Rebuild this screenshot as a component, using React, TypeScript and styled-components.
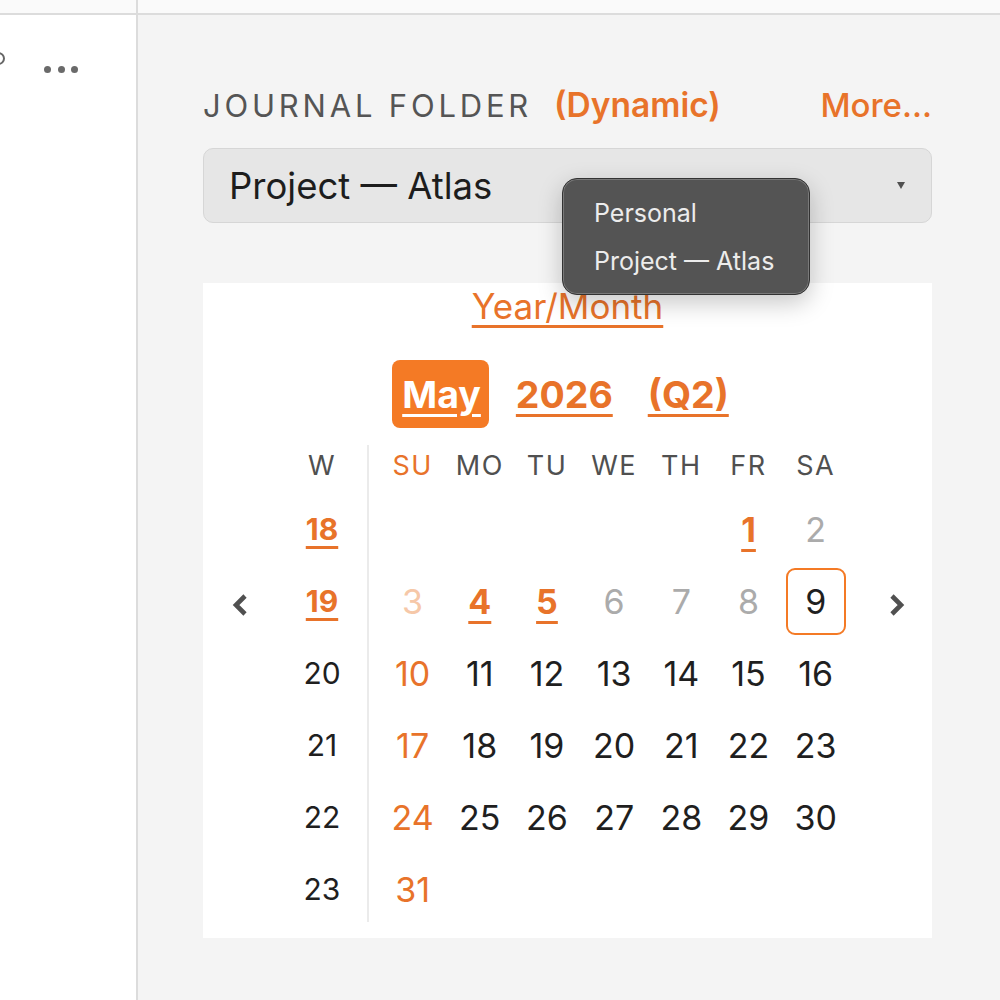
import styled, { createGlobalStyle } from 'styled-components';

const ORANGE = '#e8732a';
const ORANGE_FILL = '#f47a25';

const GlobalStyle = createGlobalStyle`
  html, body {
    margin: 0;
    padding: 0;
  }
  body {
    font-family: Inter, "Noto Sans", sans-serif;
    -webkit-font-smoothing: antialiased;
  }
  #root {
    width: 1000px;
    height: 1000px;
    overflow: hidden;
  }
`;

type DayKind = 'normal' | 'sunday' | 'muted' | 'faintSunday' | 'entry' | 'today';

interface Day {
  date: number;
  kind: DayKind;
}

const WEEKDAYS = ['SU', 'MO', 'TU', 'WE', 'TH', 'FR', 'SA'];
const FIRST_WEEK = 18;
const FIRST_WEEKDAY = 5; // May 1st 2026 is a Friday
const DAYS_IN_MONTH = 31;
const TODAY = 9;
const ENTRIES = [1, 4, 5];

function dayKind(date: number, weekday: number): DayKind {
  if (date === TODAY) return 'today';
  if (ENTRIES.includes(date)) return 'entry';
  if (date < TODAY) return weekday === 0 ? 'faintSunday' : 'muted';
  return weekday === 0 ? 'sunday' : 'normal';
}

function buildWeeks(): Day[][] {
  const weeks: Day[][] = [];
  let week: Day[] = new Array(FIRST_WEEKDAY).fill(null);
  for (let date = 1; date <= DAYS_IN_MONTH; date++) {
    const weekday = (FIRST_WEEKDAY + date - 1) % 7;
    week.push({ date, kind: dayKind(date, weekday) });
    if (weekday === 6) {
      weeks.push(week);
      week = [];
    }
  }
  if (week.length) weeks.push(week);
  return weeks;
}

function Chevron({ dir }: { dir: 'left' | 'right' }) {
  const points = dir === 'left' ? '13,3 4,12 13,21' : '4,3 13,12 4,21';
  return (
    <svg width="17" height="24" viewBox="0 0 17 24">
      <polyline points={points} fill="none" stroke="#505050" strokeWidth="4.6" />
    </svg>
  );
}

export default function App() {
  const weeks = buildWeeks();

  return (
    <>
      <GlobalStyle />
      <Page>
        <Sidebar>
          <TopStrip />
          <SidebarRow>
            <ClippedRing />
            <MoreDots>
              <span />
              <span />
              <span />
            </MoreDots>
          </SidebarRow>
        </Sidebar>

        <Main>
          <TopStrip />
          <Panel>
            <Header>
              <Label>JOURNAL FOLDER</Label>
              <Dynamic>(Dynamic)</Dynamic>
              <MoreLink>More...</MoreLink>
            </Header>

            <Select>
              <span>Project — Atlas</span>
              <Caret />
            </Select>

            <Popup>
              <PopupItem>Personal</PopupItem>
              <PopupItem>Project — Atlas</PopupItem>
            </Popup>

            <Card>
              <YearMonth>Year/Month</YearMonth>
              <MonthRow>
                <MonthButton $active>May</MonthButton>
                <MonthButton>2026</MonthButton>
                <MonthButton>(Q2)</MonthButton>
              </MonthRow>

              <Grid>
                <HeadCell $col={2} $row={1}>W</HeadCell>
                {WEEKDAYS.map((d, i) => (
                  <HeadCell key={d} $col={5 + i} $row={1} $sunday={i === 0}>
                    {d}
                  </HeadCell>
                ))}
                <Divider />
                <ArrowCell $col={1} $row={3}>
                  <Chevron dir="left" />
                </ArrowCell>
                <ArrowCell $col={12} $row={3} $shift={12}>
                  <Chevron dir="right" />
                </ArrowCell>

                {weeks.map((week, r) => {
                  const weekNo = FIRST_WEEK + r;
                  const hasEntry = week.some((d) => d && d.kind === 'entry');
                  return [
                    <WeekCell key={`w${weekNo}`} $row={r + 2} $entry={hasEntry}>
                      <span>{weekNo}</span>
                    </WeekCell>,
                    ...week.map((day, c) =>
                      day ? (
                        <DayCell key={day.date} $col={5 + c} $row={r + 2} $kind={day.kind}>
                          <span>{day.date}</span>
                        </DayCell>
                      ) : null,
                    ),
                  ];
                })}
              </Grid>
            </Card>
          </Panel>
        </Main>
      </Page>
    </>
  );
}

const Page = styled.div`
  display: flex;
  width: 1000px;
  height: 1000px;
`;

const TopStrip = styled.div`
  height: 13px;
  background: #fafafa;
  border-bottom: 2px solid #dcdcdc;
`;

const Sidebar = styled.aside`
  width: 136px;
  flex-shrink: 0;
  background: #ffffff;
  border-right: 2px solid #dcdcdc;
  overflow: hidden;
`;

const SidebarRow = styled.div`
  display: flex;
  align-items: flex-start;
  padding-top: 37px;
`;

const ClippedRing = styled.div`
  width: 9px;
  height: 9px;
  margin-left: -8px;
  border: 2.5px solid #666;
  border-radius: 50%;
  flex-shrink: 0;
`;

const MoreDots = styled.div`
  display: flex;
  gap: 6.5px;
  margin-left: 39px;
  margin-top: 14px;

  span {
    width: 7px;
    height: 7px;
    border-radius: 50%;
    background: #6a6a6a;
  }
`;

const Main = styled.main`
  flex: 1;
  background: #f4f4f4;
`;

const Panel = styled.section`
  position: relative;
  width: 729px;
  margin: 72px 0 0 65px;
`;

const Header = styled.div`
  display: flex;
  align-items: baseline;
  height: 36px;
  line-height: 36px;
`;

const Label = styled.span`
  font-size: 31px;
  font-weight: 400;
  letter-spacing: 3.8px;
  color: #555555;
`;

const Dynamic = styled.span`
  margin-left: 22px;
  font-size: 33.5px;
  font-weight: 600;
  color: ${ORANGE};
`;

const MoreLink = styled.span`
  margin-left: auto;
  font-size: 33px;
  font-weight: 500;
  color: ${ORANGE};
`;

const Select = styled.div`
  display: flex;
  align-items: center;
  justify-content: space-between;
  box-sizing: border-box;
  height: 75px;
  margin-top: 25px;
  padding: 0 26px 0 25px;
  background: #e6e6e6;
  border: 1.5px solid #d6d6d6;
  border-radius: 10px;
  font-size: 36.5px;
  color: #1d1d1d;
`;

const Caret = styled.span`
  width: 0;
  height: 0;
  border-left: 4.5px solid transparent;
  border-right: 4.5px solid transparent;
  border-top: 7px solid #505050;
`;

const Popup = styled.div`
  position: absolute;
  top: 91px;
  left: 359px;
  z-index: 2;
  width: 248px;
  box-sizing: border-box;
  padding: 10px 0 9px 31px;
  background: #545454;
  border: 1px solid #333;
  border-radius: 15px;
  box-shadow:
    inset 0 0 0 1px rgba(255, 255, 255, 0.22),
    0 8px 24px rgba(0, 0, 0, 0.22);
`;

const PopupItem = styled.div`
  height: 48px;
  line-height: 48px;
  font-size: 25px;
  color: #ececec;
  white-space: nowrap;
`;

const Card = styled.div`
  margin-top: 60px;
  padding: 1px 0 13px;
  background: #ffffff;
`;

const YearMonth = styled.div`
  height: 40px;
  line-height: 44px;
  text-align: center;
  font-size: 35px;
  color: ${ORANGE};
  text-decoration: underline;
  text-decoration-thickness: 2.5px;
  text-underline-offset: 6px;
`;

const MonthRow = styled.div`
  display: flex;
  justify-content: center;
  gap: 17px;
  margin-top: 36px;
  padding-right: 6px;
`;

const MonthButton = styled.span<{ $active?: boolean }>`
  display: flex;
  align-items: center;
  height: 68px;
  padding: 0 8px 0 10px;
  border-radius: 8px;
  font-size: 37.5px;
  font-weight: 700;
  background: ${(p) => (p.$active ? ORANGE_FILL : 'transparent')};
  color: ${(p) => (p.$active ? '#ffffff' : ORANGE)};
  text-decoration: underline;
  text-decoration-thickness: 3px;
  text-underline-offset: 6px;
`;

const Grid = styled.div`
  display: grid;
  grid-template-columns: 74px 90px 2px 10px repeat(7, 67.2px) 1fr;
  grid-template-rows: 56px repeat(6, 72px);
  margin-top: 9px;
`;

const Cell = styled.div<{ $col: number; $row: number }>`
  grid-column: ${(p) => p.$col};
  grid-row: ${(p) => p.$row};
  display: flex;
  align-items: center;
  justify-content: center;
`;

const HeadCell = styled(Cell)<{ $sunday?: boolean }>`
  font-size: 27px;
  letter-spacing: 1.5px;
  color: ${(p) => (p.$sunday ? ORANGE : '#505050')};
`;

const Divider = styled.div`
  grid-column: 3;
  grid-row: 1 / -1;
  margin: 8px 0 3px;
  background: #ebebeb;
`;

const ArrowCell = styled(Cell)<{ $shift?: number }>`
  padding-left: ${(p) => p.$shift ?? 0}px;
  padding-top: 8px;
`;

const WeekCell = styled.div<{ $row: number; $entry: boolean }>`
  grid-column: 2;
  grid-row: ${(p) => p.$row};
  display: flex;
  align-items: center;
  justify-content: center;
  font-size: 30px;
  font-weight: ${(p) => (p.$entry ? 700 : 400)};
  color: ${(p) => (p.$entry ? ORANGE : '#1f1f1f')};
  text-decoration: ${(p) => (p.$entry ? 'underline' : 'none')};
  text-decoration-thickness: 2.5px;
  text-underline-offset: 6px;
`;

const dayColors: Record<DayKind, string> = {
  normal: '#1f1f1f',
  sunday: ORANGE,
  muted: '#ababab',
  faintSunday: '#f6c8a8',
  entry: ORANGE,
  today: '#1f1f1f',
};

const DayCell = styled(Cell)<{ $kind: DayKind }>`
  font-size: 34px;
  font-weight: ${(p) => (p.$kind === 'entry' ? 700 : 400)};
  color: ${(p) => dayColors[p.$kind]};

  span {
    text-decoration: ${(p) => (p.$kind === 'entry' ? 'underline' : 'none')};
    text-decoration-thickness: 3px;
    text-underline-offset: 7px;
  }

  ${(p) =>
    p.$kind === 'today' &&
    `
    span {
      display: flex;
      align-items: center;
      justify-content: center;
      box-sizing: border-box;
      width: 60px;
      height: 67px;
      border: 2px solid ${ORANGE_FILL};
      border-radius: 9px;
    }
  `}
`;
